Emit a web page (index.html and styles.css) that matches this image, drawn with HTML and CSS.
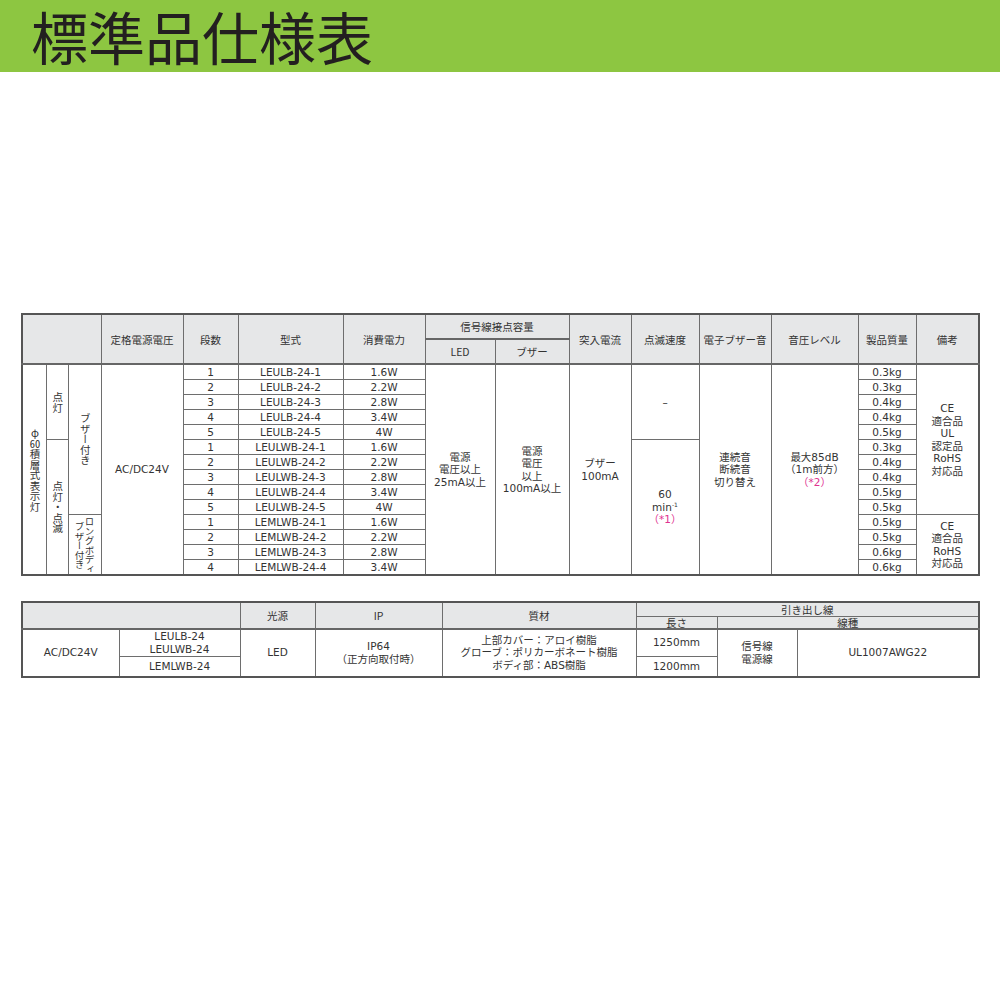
FILE: index.html
```html
<!DOCTYPE html>
<html lang="ja">
<head>
<meta charset="utf-8">
<title>標準品仕様表</title>
<link rel="stylesheet" href="styles.css">
</head>
<body>
<header class="band"><h1 class="title">標準品仕様表</h1></header>
<main class="content">
<table class="spec t1">
<colgroup>
<col style="width:24px"><col style="width:22px"><col style="width:33px"><col style="width:82px"><col style="width:55px"><col style="width:105px"><col style="width:82px"><col style="width:70px"><col style="width:74px"><col style="width:62px"><col style="width:68px"><col style="width:72px"><col style="width:87px"><col style="width:58px"><col style="width:63px">
</colgroup>
<thead>
<tr class="hr">
<th colspan="3" rowspan="2"></th>
<th rowspan="2">定格電源電圧</th>
<th rowspan="2">段数</th>
<th rowspan="2">型式</th>
<th rowspan="2">消費電力</th>
<th colspan="2">信号線接点容量</th>
<th rowspan="2">突入電流</th>
<th rowspan="2">点滅速度</th>
<th rowspan="2">電子ブザー音</th>
<th rowspan="2">音圧レベル</th>
<th rowspan="2">製品質量</th>
<th rowspan="2">備考</th>
</tr>
<tr class="hr">
<th>LED</th>
<th>ブザー</th>
</tr>
</thead>
<tbody>
<tr>
<td rowspan="14" class="vc"><span class="vt">φ<span class="tcy">60</span>積層式表示灯</span></td>
<td rowspan="5" class="vc"><span class="vt">点灯</span></td>
<td rowspan="10" class="vc"><span class="vt">ブザー付き</span></td>
<td rowspan="14">AC/DC24V</td>
<td>1</td><td>LEULB-24-1</td><td>1.6W</td>
<td rowspan="14" class="ml">電源<br>電圧以上<br>25mA以上</td>
<td rowspan="14" class="ml">電源<br>電圧<br>以上<br>100mA以上</td>
<td rowspan="14" class="ml">ブザー<br>100mA</td>
<td rowspan="5">–</td>
<td rowspan="14" class="ml">連続音<br>断続音<br>切り替え</td>
<td rowspan="14" class="ml">最大85dB<br>（1m前方）<br><span class="pink">（*2）</span></td>
<td>0.3kg</td>
<td rowspan="10" class="ml">CE<br>適合品<br>UL<br>認定品<br>RoHS<br>対応品</td>
</tr>
<tr><td>2</td><td>LEULB-24-2</td><td>2.2W</td><td>0.3kg</td></tr>
<tr><td>3</td><td>LEULB-24-3</td><td>2.8W</td><td>0.4kg</td></tr>
<tr><td>4</td><td>LEULB-24-4</td><td>3.4W</td><td>0.4kg</td></tr>
<tr><td>5</td><td>LEULB-24-5</td><td>4W</td><td>0.5kg</td></tr>
<tr>
<td rowspan="9" class="vc"><span class="vt">点灯・点滅</span></td>
<td>1</td><td>LEULWB-24-1</td><td>1.6W</td>
<td rowspan="9" class="ml">60<br>min<sup>-1</sup><br><span class="pink">（*1）</span></td>
<td>0.3kg</td>
</tr>
<tr><td>2</td><td>LEULWB-24-2</td><td>2.2W</td><td>0.4kg</td></tr>
<tr><td>3</td><td>LEULWB-24-3</td><td>2.8W</td><td>0.4kg</td></tr>
<tr><td>4</td><td>LEULWB-24-4</td><td>3.4W</td><td>0.5kg</td></tr>
<tr><td>5</td><td>LEULWB-24-5</td><td>4W</td><td>0.5kg</td></tr>
<tr>
<td rowspan="4" class="vtop"><span class="vt vsmall">ロングボディ<br>ブザー付き</span></td>
<td>1</td><td>LEMLWB-24-1</td><td>1.6W</td><td>0.5kg</td>
<td rowspan="4" class="ml">CE<br>適合品<br>RoHS<br>対応品</td>
</tr>
<tr><td>2</td><td>LEMLWB-24-2</td><td>2.2W</td><td>0.5kg</td></tr>
<tr><td>3</td><td>LEMLWB-24-3</td><td>2.8W</td><td>0.6kg</td></tr>
<tr><td>4</td><td>LEMLWB-24-4</td><td>3.4W</td><td>0.6kg</td></tr>
</tbody>
</table>

<table class="spec t2">
<colgroup>
<col style="width:97px"><col style="width:121px"><col style="width:75px"><col style="width:127px"><col style="width:194px"><col style="width:81px"><col style="width:80px"><col style="width:182px">
</colgroup>
<thead>
<tr class="h1">
<th colspan="2" rowspan="2"></th>
<th rowspan="2">光源</th>
<th rowspan="2">IP</th>
<th rowspan="2">質材</th>
<th colspan="3">引き出し線</th>
</tr>
<tr class="h2">
<th>長さ</th>
<th colspan="2">線種</th>
</tr>
</thead>
<tbody>
<tr class="b1">
<td rowspan="2">AC/DC24V</td>
<td class="ml">LEULB-24<br>LEULWB-24</td>
<td rowspan="2">LED</td>
<td rowspan="2" class="ml">IP64<br>（正方向取付時）</td>
<td rowspan="2" class="ml">上部カバー：アロイ樹脂<br>グローブ：ポリカーボネート樹脂<br>ボディ部：ABS樹脂</td>
<td>1250mm</td>
<td rowspan="2" class="ml">信号線<br>電源線</td>
<td rowspan="2">UL1007AWG22</td>
</tr>
<tr class="b2">
<td>LEMLWB-24</td>
<td>1200mm</td>
</tr>
</tbody>
</table>
</main>
</body>
</html>
```

FILE: styles.css
```css
html, body {
  margin: 0;
  padding: 0;
  background: #ffffff;
}

.band {
  background: #8dc641;
  height: 72px;
  padding-left: 31px;
  box-sizing: border-box;
}

.title {
  margin: 0;
  font-family: "Noto Sans CJK JP", sans-serif;
  font-weight: 400;
  font-size: 57px;
  line-height: 70px;
  color: #231f20;
  letter-spacing: 0;
}

.content {
  padding: 0 22px 0 21px;
}

.spec {
  border-collapse: collapse;
  table-layout: fixed;
  width: 957px;
  border: 2px solid #555555;
  font-family: "DejaVu Sans", "Noto Sans CJK JP", sans-serif;
  font-size: 10.5px;
  color: #333333;
}

.spec th,
.spec td {
  border: 1px solid #6e6e6e;
  padding: 0;
  text-align: center;
  vertical-align: middle;
  font-weight: normal;
  line-height: 13px;
  white-space: nowrap;
  overflow: hidden;
}

.spec th {
  background: #e6e7e8;
  font-family: "Noto Sans CJK JP", sans-serif;
  font-size: 10.5px;
}

.t1 {
  margin-top: 241px;
}

.t1 thead th {
  border-bottom: 2px solid #666666;
}

.t1 .hr {
  height: 25px;
}

.t1 tbody tr {
  height: 15px;
}

.t1 tbody td {
  height: 14px;
}

.spec .ml {
  line-height: 12.5px;
}

.vc {
  line-height: 0 !important;
}

.vtop {
  vertical-align: top !important;
  line-height: 0 !important;
}

.vt {
  display: inline-block;
  writing-mode: vertical-rl;
  text-orientation: upright;
  font-family: "Noto Sans CJK JP", sans-serif;
  font-size: 10.5px;
  line-height: 10.5px;
  vertical-align: middle;
}

.vsmall {
  font-size: 9.5px;
  line-height: 10px;
  margin-top: 2px;
}

.tcy {
  text-combine-upright: all;
}

.pink {
  color: #e0338f;
}

sup {
  font-size: 6px;
  line-height: 0;
  vertical-align: 4px;
}

.t2 {
  margin-top: 25px;
}

.t2 thead th {
  line-height: 11px;
}

.t2 thead tr.h2 th {
  border-bottom: 2px solid #666666;
}

.t2 thead tr.h1 th[rowspan] {
  border-bottom: 2px solid #666666;
}

.t2 .h1 {
  height: 14px;
}

.t2 .h2 {
  height: 12px;
}

.t2 .b1 {
  height: 28px;
}

.t2 .b2 {
  height: 20px;
}
```
